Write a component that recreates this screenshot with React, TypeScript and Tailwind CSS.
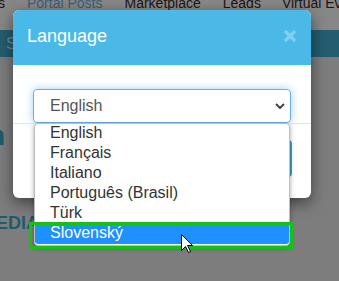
import React from "react";

const items = ["English", "Français", "Italiano", "Português (Brasil)", "Türk", "Slovenský"];

export default function App() {
  return (
    <div className="relative w-[339px] h-[281px] overflow-hidden bg-[#7d7d7d] font-['Liberation_Sans',Arial,sans-serif]">
      {/* background page (under overlay) */}
      <div className="h-[30px] bg-[#878787] overflow-hidden">
        <div className="flex mt-[-7px] text-[14px] leading-[20px] whitespace-nowrap text-[#1c1414]">
          <span className="ml-[-2px]">s</span>
          <span className="ml-[22px] text-[#3c5d78]">Portal Posts</span>
          <span className="ml-[22px]">Marketplace</span>
          <span className="ml-[22px]">Leads</span>
          <span className="ml-[21px]">Virtual Events</span>
        </div>
      </div>
      <div className="h-[27px] bg-[#245d70] flex items-center">
        <span className="ml-[6px] text-[16px] text-[#6d8b97]">S</span>
      </div>
      <div className="pt-[63px] text-[#1f5a6e] font-bold">
        <div className="ml-[-12px] text-[28px] leading-[32px]">n</div>
        <div className="mt-[61px] ml-[-19px] text-[18px] leading-[20px] whitespace-nowrap">MEDIA</div>
      </div>

      {/* modal */}
      <div className="absolute left-[13px] top-[10px] w-[298px] h-[188px] rounded-[6px] bg-white overflow-hidden shadow-[0_5px_15px_rgba(0,0,0,0.5)]">
        <div className="h-[55px] bg-[#4bb9e8] flex items-center justify-between pl-[14px] pr-[15px] pb-[2px]">
          <span className="text-[18px] text-white">Language</span>
          <svg width="12" height="12" viewBox="0 0 12 12" className="mb-[1px]">
            <path d="M2 2 L10 10 M10 2 L2 10" stroke="#84cfef" strokeWidth="3.2" strokeLinecap="round" />
          </svg>
        </div>
        <div className="h-[58px] px-[20px] pt-[24px]">
          <div className="h-[34px] rounded-[4px] border border-[#66afe9] shadow-[0_0_8px_rgba(102,175,233,0.6)] flex items-center justify-between pl-[16px] pr-[5px]">
            <span className="text-[16px] text-[#555]">English</span>
            <svg width="10" height="6" viewBox="0 0 10 6">
              <path d="M1 1 L5 5 L9 1" stroke="#444" strokeWidth="2" fill="none" />
            </svg>
          </div>
        </div>
        <div className="border-t border-[#e5e5e5] flex justify-end pt-[16px] pr-[19px]">
          <div className="w-[80px] h-[37px] rounded-[4px] bg-[#3a9fc5]" />
        </div>
      </div>

      {/* open dropdown list */}
      <div className="absolute left-[34px] top-[123px] w-[256px] rounded-[4px] border border-[#bdbdbd] bg-white pb-[1px] shadow-[0_2px_5px_rgba(0,0,0,0.35)] overflow-hidden">
        {items.map((it, i) => (
          <div
            key={it}
            className={
              i === items.length - 1
                ? "h-[20px] leading-[18px] pl-[15px] text-[16px] bg-[#1e90ff] text-white rounded-b-[3px]"
                : "h-[20px] leading-[18px] pl-[15px] text-[16px] text-[#333]"
            }
          >
            {it}
          </div>
        ))}
      </div>

      {/* green highlight frame */}
      <div className="absolute left-[29px] top-[222px] w-[264px] h-[27px] border-[3px] border-[#14c114]" />

      {/* mouse cursor */}
      <svg className="absolute left-[180px] top-[233px]" width="14" height="21" viewBox="0 0 14 21">
        <path
          d="M1.5 1.5 L1.5 17.5 L5.5 13.5 L8.5 19.5 L10.5 18.5 L7.5 12.5 L12.5 12.5 Z"
          fill="#fff"
          stroke="#000"
          strokeWidth="1"
          strokeLinejoin="miter"
        />
      </svg>
    </div>
  );
}
